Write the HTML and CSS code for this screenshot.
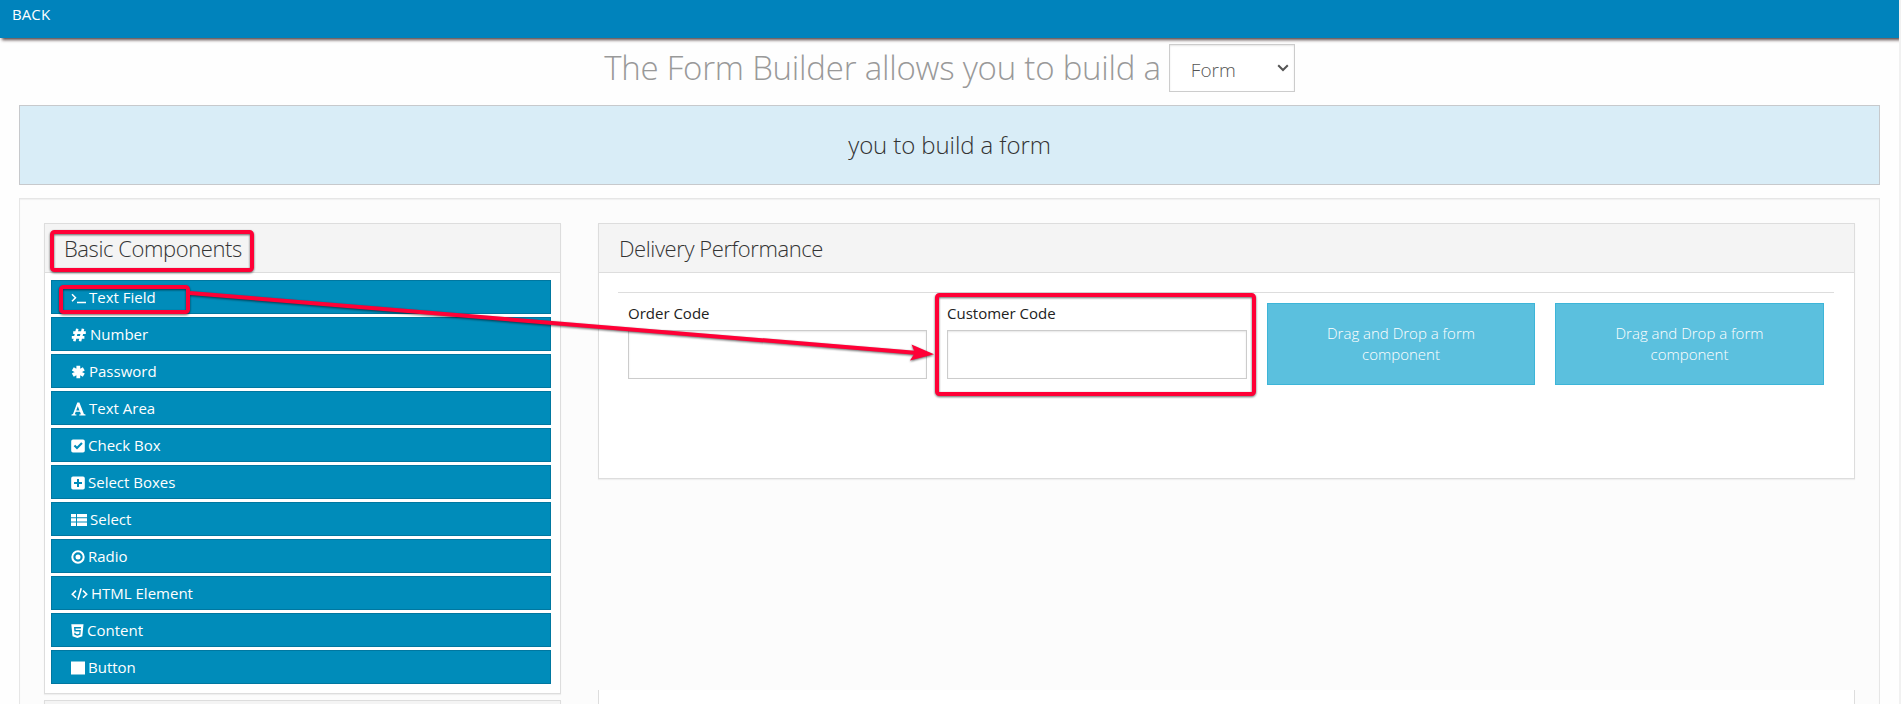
FILE: index.html
```html
<!DOCTYPE html>
<html lang="en">
<head>
<meta charset="utf-8">
<title>Form Builder</title>
<link rel="stylesheet" href="styles.css">
</head>
<body>
<div class="page">
  <header class="topbar"><a class="back">BACK</a></header>
  <div class="title-row">
    <h1 class="title">The Form Builder allows you to build a</h1>
    <div class="select"><span>Form</span>
      <svg class="chevron" viewBox="0 0 12 8"><path d="M1.2 1.2 6 6l4.800-4.800"/></svg>
    </div>
  </div>
  <div class="alert"><span>you to build a form</span></div>
  <main class="well">
    <aside class="sidebar">
      <section class="panel">
        <h3 class="panel-head">Basic Components</h3>
        <div class="components">
          <div class="component"><svg class="icon" width="15" height="14" viewBox="0 0 15 14"><path class="line prompt" d="M1 3.200 4.500 6.700 1 10.200M6 11.500H15"/></svg>Text Field</div>
          <div class="component"><svg class="icon" width="16" height="14" viewBox="0 0 16 14"><path class="line heavy" d="M6.300 .8 3.300 13.200M12 .8 9 13.200M2.200 4.600H14.800M.8 9.400H13.400"/></svg>Number</div>
          <div class="component"><svg class="icon" width="15" height="14" viewBox="0 0 15 14"><path class="line fat" d="M7.300 .7V13.300M1.800 3.800 12.800 10.200M12.800 3.800 1.800 10.200"/></svg>Password</div>
          <div class="component"><svg class="icon" width="15" height="14" viewBox="0 0 15 14"><path d="M6.300 .5H8.400L12.900 12.100 14.500 12.500V13.500H8.300V12.500L9.900 12.200 9 9.700H4.700L3.800 12.200 5.400 12.500V13.500H.5V12.500L2 12.100ZM6.800 4.200 5.200 8.500H8.500Z"/></svg>Text Area</div>
          <div class="component"><svg class="icon" width="14" height="14" viewBox="0 0 14 14"><path d="M2 .5H12A1.800 1.800 0 0 1 13.800 2.300V11.700A1.800 1.800 0 0 1 12 13.500H2A1.800 1.800 0 0 1 .2 11.700V2.300A1.800 1.800 0 0 1 2 .5ZM2.700 7.200 6 10.500 11.700 4.800 10.200 3.300 6 7.500 4.200 5.700Z"/></svg>Check Box</div>
          <div class="component"><svg class="icon" width="14" height="14" viewBox="0 0 14 14"><path d="M2 .5H12A1.800 1.800 0 0 1 13.800 2.300V11.700A1.800 1.800 0 0 1 12 13.500H2A1.800 1.800 0 0 1 .2 11.700V2.300A1.800 1.800 0 0 1 2 .5ZM6 3V6H3V8H6V11H8V8H11V6H8V3Z"/></svg>Select Boxes</div>
          <div class="component"><svg class="icon" width="16" height="14" viewBox="0 0 16 14"><path d="M0 1H5V4.300H0ZM6 1H16V4.300H6ZM0 5.300H5V8.600H0ZM6 5.300H16V8.600H6ZM0 9.600H5V13H0ZM6 9.600H16V13H6Z"/></svg>Select</div>
          <div class="component"><svg class="icon" width="14" height="14" viewBox="0 0 14 14"><circle class="line" cx="7" cy="7" r="5.700"/><circle cx="7" cy="7" r="2.500"/></svg>Radio</div>
          <div class="component"><svg class="icon" width="17" height="14" viewBox="0 0 17 14"><path class="line thin" d="M5 3.600 1.300 7.200 5 10.800M12 3.600 15.700 7.200 12 10.800M10.200 1.300 6.900 12.900"/></svg>HTML Element</div>
          <div class="component"><svg class="icon" width="13" height="14" viewBox="0 0 13 14"><path d="M.3 .3H12.500L11.300 12.300 6.400 14 1.500 12.300ZM3 3 3.400 7.400H8.500L8.300 9.700 6.400 10.300 4.600 9.700 4.500 8.700H3.200L3.400 10.800 6.400 11.800 9.400 10.800 9.800 6.100H4.700L4.500 4.400H9.900L10 3Z"/></svg>Content</div>
          <div class="component"><svg class="icon" width="14" height="14" viewBox="0 0 14 14"><path d="M0 .5H14V13.500H0Z"/></svg>Button</div>
        </div>
      </section>
      <section class="panel"><h3 class="panel-head"></h3></section>
    </aside>
    <div class="workspace">
      <section class="panel canvas">
        <h3 class="panel-head wide">Delivery Performance</h3>
        <div class="canvas-body">
          <div class="fields">
            <label class="field">Order Code<span class="input"></span></label>
            <label class="field second">Customer Code<span class="input"></span></label>
            <div class="drop">Drag and Drop a form<br>component</div>
            <div class="drop">Drag and Drop a form<br>component</div>
          </div>
        </div>
      </section>
      <section class="preview"></section>
    </div>
  </main>
  <svg class="annotations" viewBox="0 0 1901 704">
    <rect x="52" y="232" width="200" height="38" rx="2.500"/>
    <rect x="61" y="287" width="127" height="25" rx="2.500"/>
    <rect x="937" y="295" width="317" height="99" rx="2.500"/>
    <path class="shaft" d="M190 293 915 352.800"/>
    <path class="head" d="M934 354.300 911.500 344.500 915 352.800 910 360.500Z"/>
  </svg>
</div>
</body>
</html>
```
FILE: styles.css
```css
* { box-sizing: border-box; }
html { background: #f1f1f1; }
body { margin: 0; font-family: "Open Sans", "Noto Sans", sans-serif; font-size: 15px; color: #222; }
.page { position: relative; width: 1899px; height: 704px; overflow: hidden; background: #fefefe; }
.topbar { height: 38px; padding: 5px 12px; background: #0083bc; color: #fff; line-height: 21px; font-size: 15px; box-shadow: 2px 2px 3px rgba(60, 40, 40, .85); }
.back { display: block; margin-top: -1px; letter-spacing: .1px; }
.title-row { height: 67px; padding-top: 6px; display: flex; justify-content: center; gap: 8px; }
.title { margin: 0; font-size: 33px; letter-spacing: -.22px; line-height: 48px; font-weight: 300; color: #999; white-space: nowrap; }
.select { width: 126px; height: 48px; padding: 0 5px 0 21px; display: flex; align-items: center; justify-content: space-between; border: 1px solid #ccc; background: #fff; box-shadow: inset 0 1px 2px rgba(0, 0, 0, .1); font-size: 19px; font-weight: 300; color: #555; }
.select span { padding-top: 3px; }
.chevron { width: 12px; height: 8px; fill: none; stroke: #555; stroke-width: 2; }
.alert { height: 80px; margin: 0 19px; padding-bottom: 2px; display: flex; align-items: center; justify-content: center; border: 1px solid #c7c9cc; background: #d9edf7; font-size: 24px; letter-spacing: -.1px; font-weight: 300; color: #333; }
.well { height: 540px; margin: 13px 19px 0; padding: 24px; display: flex; gap: 37px; border: 1px solid #e6e6e6; background: #fcfcfc; box-shadow: inset 0 1px 1px rgba(0, 0, 0, .05); }
.sidebar { width: 517px; display: flex; flex-direction: column; gap: 6px; }
.panel { border: 1px solid #ddd; background: #fff; box-shadow: 0 1px 1px rgba(0, 0, 0, .05); }
.panel-head { height: 49px; margin: 0; padding: 0 19px; border-bottom: 1px solid #ddd; background: #f4f4f4; font-size: 22px; letter-spacing: -.42px; line-height: 49px; font-weight: 300; color: #333; }
.wide { padding-left: 20px; }
.components { padding: 7px 9px 9px 6px; display: flex; flex-direction: column; gap: 3px; }
.component { height: 34px; padding: 0 19px 0 19px; display: flex; align-items: center; gap: 3px; border: 1px solid #0077a0; background: #008cba; color: #fff; font-size: 15px; line-height: 32px; }
.icon { fill: #fff; fill-rule: evenodd; flex: none; margin-top: 2px; }
.line { fill: none; stroke: #fff; stroke-width: 2; }
.prompt { stroke-width: 1.500; }
.heavy { stroke-width: 2.600; }
.fat { stroke-width: 3.800; stroke-linecap: butt; }
.thin { stroke-width: 1.600; }
.workspace { width: 1257px; }
.canvas { height: 256px; }
.canvas-body { padding: 19px 20px 0 19px; }
.fields { height: 140px; padding: 10px 10px 0; display: grid; grid-template-columns: 299px 300px 268px 269px; column-gap: 20px; align-items: start; border-top: 1px solid #ddd; }
.field { display: flex; flex-direction: column; line-height: 21px; gap: 6px; font-size: 15px; }
.input { height: 49px; border: 1px solid #ccc; background: #fff; box-shadow: inset 0 1px 2px rgba(0, 0, 0, .1); }
.drop { height: 82px; padding-top: 19px; border: 1px solid #3db5d8; background: #5bc0de; color: #fff; text-align: center; line-height: 21.400px; font-size: 15px; font-weight: 300; }
.preview { height: 20px; margin-top: 211px; border: 1px solid #ddd; border-width: 0 1px; background: #fff; }
.annotations { position: absolute; top: 0; left: 0; width: 1901px; height: 704px; fill: none; stroke: #ff0036; stroke-width: 4; filter: drop-shadow(0 1px 1px rgba(0, 0, 0, .6)); }
.head { fill: #ff0036; stroke: none; }
```
